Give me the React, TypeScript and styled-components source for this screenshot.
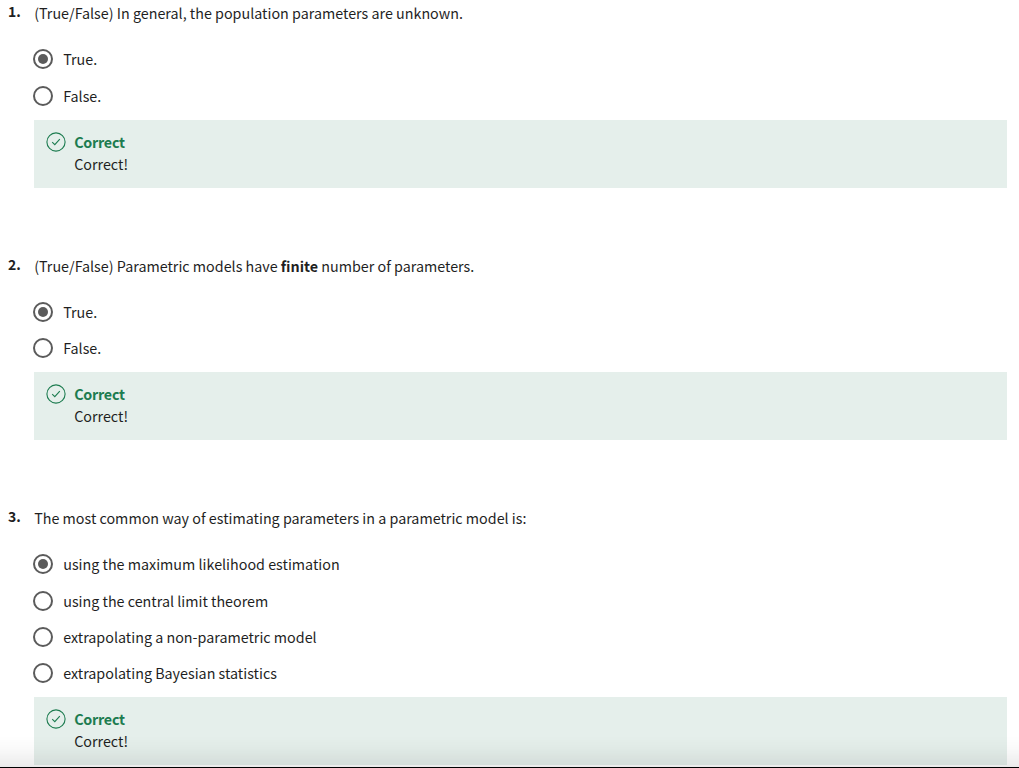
import React from "react";
import styled, { createGlobalStyle } from "styled-components";

const GlobalStyle = createGlobalStyle`
  * { box-sizing: border-box; }
  html, body { margin: 0; padding: 0; background: #fff; }
  body {
    height: 768px;
    overflow: hidden;
    color: #1f1f1f;
    font-family: "Noto Sans CJK SC", "Noto Sans", sans-serif;
    font-size: 14.32px;
    line-height: 22px;
  }
`;

const Page = styled.main`
  height: 768px;
  overflow: hidden;
  padding: 2.4px 12px 0 8px;
`;

const Question = styled.section`
  display: grid;
  grid-template-columns: 26px 1fr;
  padding-bottom: 67px;
`;

const Index = styled.div`
  font-weight: 700;
  font-size: 14px;
  line-height: 18px;
  letter-spacing: -0.1px;
`;

const Prompt = styled.p`
  margin: 0 0 16.8px;
  padding-left: 0.2px;
  line-height: 22px;
`;

const Options = styled.div`
  display: flex;
  flex-direction: column;
  margin-left: -1px;
  padding-bottom: 5.8px;
`;

const Option = styled.label`
  display: flex;
  align-items: center;
  gap: 10.2px;
  height: 36.4px;
`;

const OptionText = styled.span`
  line-height: 22px;
`;

const Radio = styled.span<{ $checked?: boolean }>`
  display: grid;
  place-items: center;
  width: 20px;
  height: 20px;
  border: 2px solid #5b5b5b;
  border-radius: 50%;

  &::after {
    content: "";
    width: 10px;
    height: 10px;
    border-radius: 50%;
    background: ${(p) => (p.$checked ? "#5b5b5b" : "transparent")};
  }
`;

const Feedback = styled.div`
  display: flex;
  gap: 8.2px;
  height: 68px;
  padding: 12px;
  background: #e5efeb;
`;

const FeedbackText = styled.div`
  margin-top: -1px;
`;

const FeedbackTitle = styled.div`
  color: #1d7c50;
  font-weight: 700;
  letter-spacing: -0.25px;
`;

const BottomShade = styled.div`
  position: fixed;
  inset: auto 0 0;
  height: 32px;
  border-bottom: 1px solid #000;
  background: linear-gradient(rgba(0, 0, 0, 0), rgba(0, 0, 0, 0.02) 40%, rgba(0, 0, 0, 0.08));
`;

function CheckIcon() {
  return (
    <svg width="20" height="20" viewBox="0 0 20 20" fill="none" stroke="#1d7c50">
      <circle cx="10" cy="10" r="9.1" strokeWidth="1.1" />
      <path d="M6.2 10.2 8.8 12.7 13.8 7.2" strokeWidth="1.1" />
    </svg>
  );
}

interface Item {
  prompt: React.ReactNode;
  options: string[];
}

const items: Item[] = [
  {
    prompt: "(True/False) In general, the population parameters are unknown.",
    options: ["True.", "False."],
  },
  {
    prompt: (
      <>
        (True/False) Parametric models have <strong>finite</strong> number of parameters.
      </>
    ),
    options: ["True.", "False."],
  },
  {
    prompt: "The most common way of estimating parameters in a parametric model is:",
    options: [
      "using the maximum likelihood estimation",
      "using the central limit theorem",
      "extrapolating a non-parametric model",
      "extrapolating Bayesian statistics",
    ],
  },
];

export default function App() {
  return (
    <>
      <GlobalStyle />
      <Page>
        {items.map((item, i) => (
          <Question key={i}>
            <Index>{i + 1}.</Index>
            <div>
              <Prompt>{item.prompt}</Prompt>
              <Options>
                {item.options.map((text, n) => (
                  <Option key={text}>
                    <Radio $checked={n === 0} />
                    <OptionText>{text}</OptionText>
                  </Option>
                ))}
              </Options>
              <Feedback>
                <CheckIcon />
                <FeedbackText>
                  <FeedbackTitle>Correct</FeedbackTitle>
                  <div>Correct!</div>
                </FeedbackText>
              </Feedback>
            </div>
          </Question>
        ))}
      </Page>
      <BottomShade />
    </>
  );
}
